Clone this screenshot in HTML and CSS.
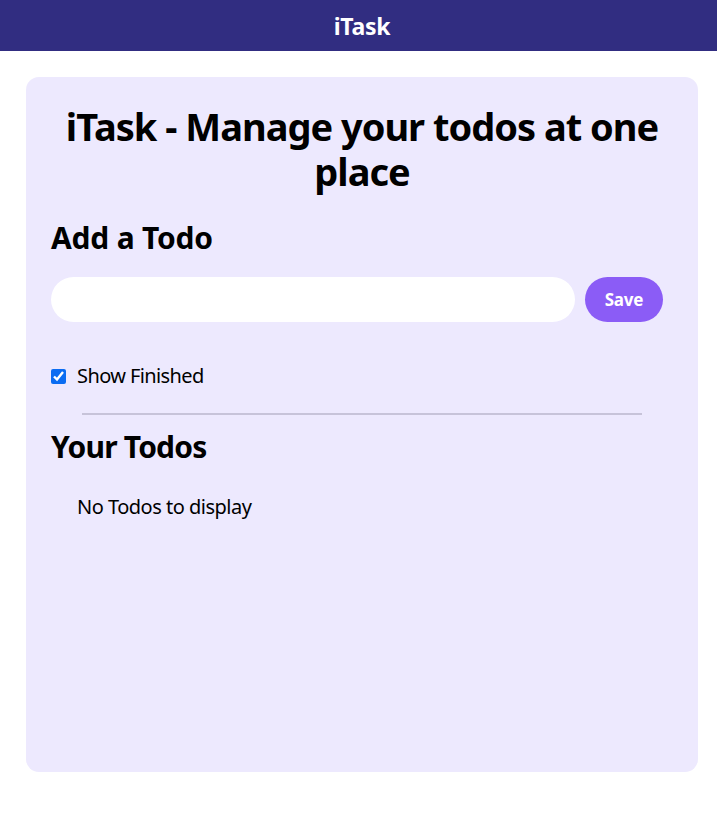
FILE: index.html
```html
<!DOCTYPE html>
<html lang="en">
<head>
<meta charset="utf-8">
<title>iTask</title>
<link rel="stylesheet" href="styles.css">
</head>
<body>
<nav class="navbar">
  <span class="brand">iTask</span>
</nav>
<main class="card">
  <h1 class="title">iTask - Manage your todos at one place</h1>
  <h2 class="section-title add-title">Add a Todo</h2>
  <div class="add-row">
    <input class="todo-input" type="text">
    <button class="save-btn">Save</button>
  </div>
  <label class="show-finished">
    <input class="check" type="checkbox" checked>
    <span>Show Finished</span>
  </label>
  <div class="divider"></div>
  <h2 class="section-title todos-title">Your Todos</h2>
  <div class="todos">
    <div class="empty">No Todos to display</div>
  </div>
</main>
</body>
</html>
```
FILE: styles.css
```css
* { box-sizing: border-box; }
html, body { margin: 0; padding: 0; background: #ffffff; }
body {
  font-family: "Noto Sans", "Open Sans", sans-serif;
  color: #000;
}
.navbar {
  height: 51px;
  background: #312d81;
  display: flex;
  align-items: center;
  justify-content: center;
  padding-left: 7px;
}
.brand {
  color: #fff;
  font-weight: 700;
  font-size: 23px;
  line-height: 30px;
  letter-spacing: -0.3px;
}
.card {
  margin: 26px 19px 0 26px;
  background: #ede9fe;
  border-radius: 13px;
  padding: 27px 25px 25px;
  min-height: 695px;
}
.title {
  margin: 0;
  text-align: center;
  font-size: 38px;
  line-height: 45px;
  font-weight: 700;
  letter-spacing: -1px;
}
.section-title {
  margin: 0;
  font-size: 30px;
  line-height: 40px;
  font-weight: 700;
}
.add-title { margin-top: 24px; letter-spacing: -0.2px; }
.add-row {
  display: flex;
  gap: 10px;
  margin-top: 19px;
}
.todo-input {
  width: 524px;
  height: 45px;
  border: none;
  border-radius: 999px;
  background: #fff;
  outline: none;
  padding: 0 15px;
  font: inherit;
}
.save-btn {
  width: 78px;
  height: 45px;
  border: none;
  border-radius: 999px;
  background: #8b5cf6;
  color: #fff;
  font-family: inherit;
  font-weight: 700;
  font-size: 17px;
  padding: 0;
  letter-spacing: -0.2px;
}
.show-finished {
  display: flex;
  align-items: center;
  gap: 11px;
  margin-top: 39px;
  font-size: 20px;
  line-height: 30px;
  letter-spacing: -0.6px;
}
.check {
  margin: 0;
  width: 15px;
  height: 15px;
  accent-color: #0b6cf2;
}
.divider {
  width: 90%;
  margin: 22px auto 0;
  height: 2px;
  background: #c7c3d9;
}
.todos-title { margin-top: 12px; letter-spacing: -0.8px; }
.todos { margin-top: 25px; padding-left: 26px; }
.empty {
  font-size: 20px;
  line-height: 30px;
  letter-spacing: -0.5px;
}
```
